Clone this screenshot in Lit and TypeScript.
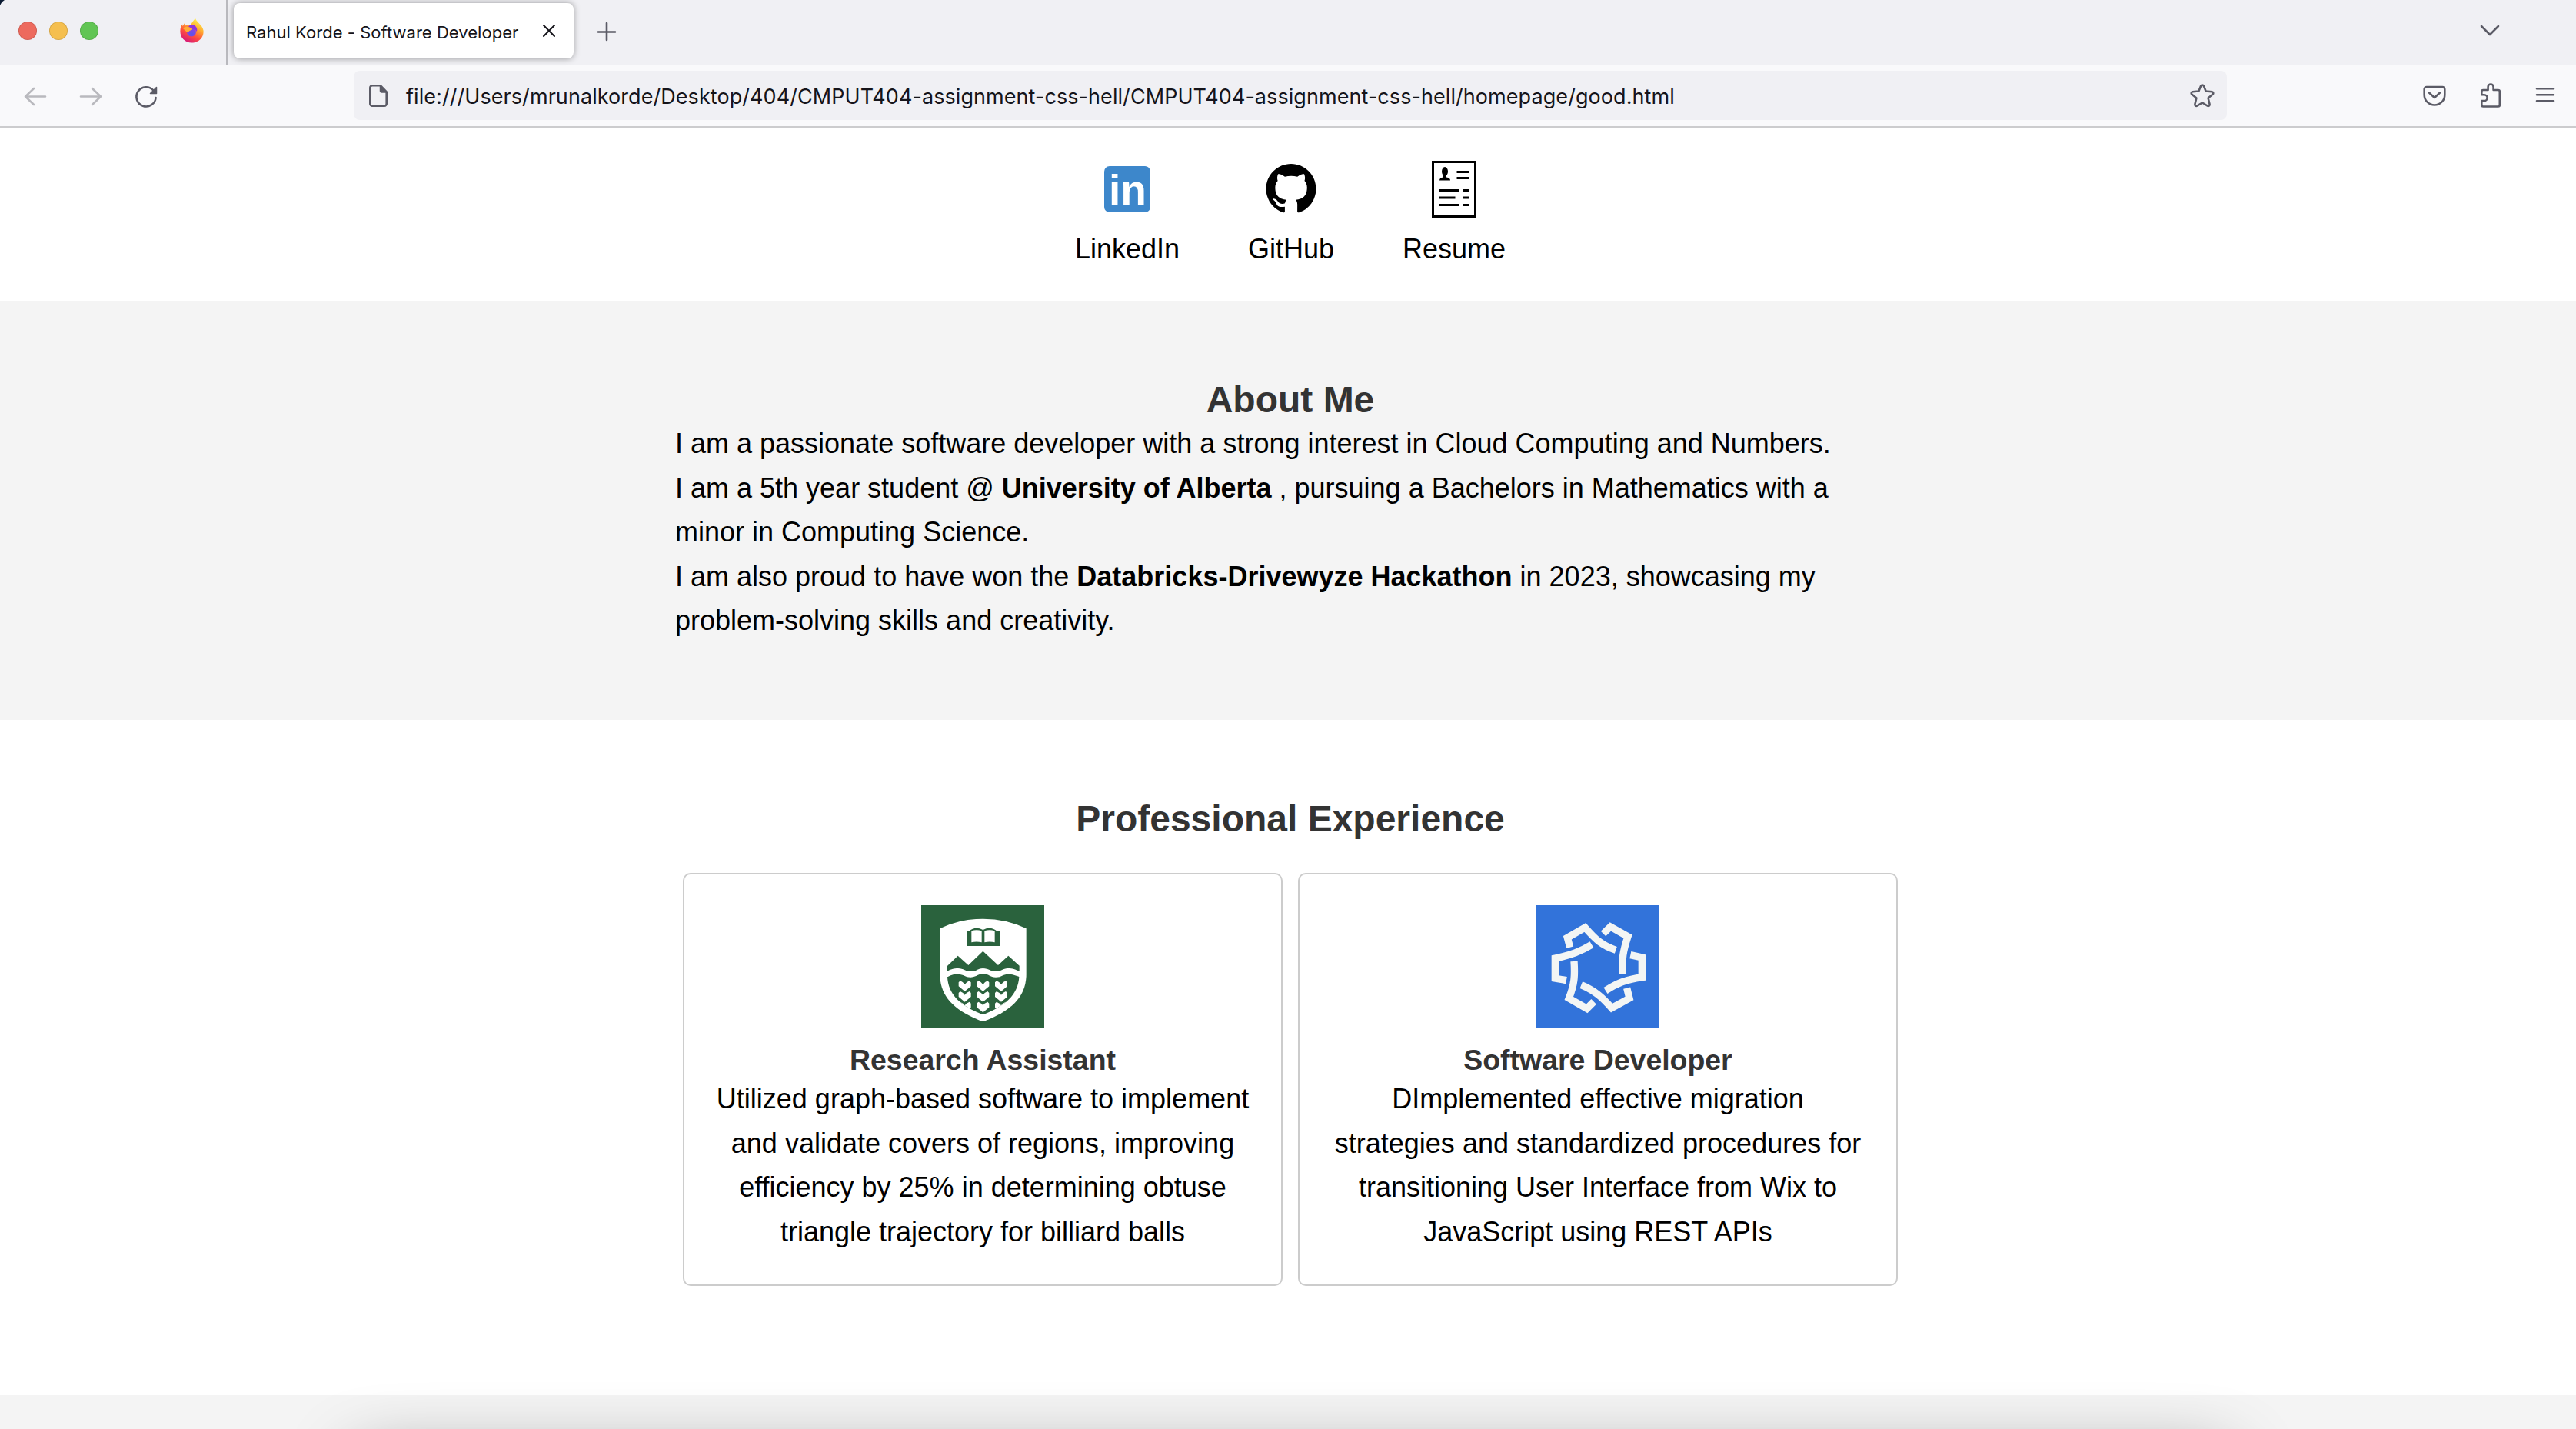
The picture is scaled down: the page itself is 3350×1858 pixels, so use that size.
import { LitElement, html, css, svg } from "lit";
import { customElement } from "lit/decorators.js";

const octocat =
  "M8 0C3.58 0 0 3.58 0 8c0 3.54 2.29 6.53 5.47 7.59.4.07.55-.17.55-.38 0-.19-.01-.82-.01-1.49-2.01.37-2.53-.49-2.69-.94-.09-.23-.48-.94-.82-1.13-.28-.15-.68-.52-.01-.53.63-.01 1.08.58 1.23.82.72 1.21 1.87.87 2.33.66.07-.52.28-.87.51-1.07-1.78-.2-3.64-.89-3.64-3.95 0-.87.31-1.59.82-2.15-.08-.2-.36-1.02.08-2.12 0 0 .67-.21 2.2.82.64-.18 1.32-.27 2-.27.68 0 1.36.09 2 .27 1.53-1.04 2.2-.82 2.2-.82.44 1.1.16 1.92.08 2.12.51.56.82 1.27.82 2.15 0 3.07-1.87 3.75-3.65 3.95.29.25.54.73.54 1.48 0 1.07-.01 1.93-.01 2.2 0 .21.15.46.55.38A8.013 8.013 0 0016 8c0-4.42-3.58-8-8-8z";

@customElement("browser-chrome")
export class BrowserChrome extends LitElement {
  static styles = css`
    :host {
      display: block;
      font-family: Inter, "Liberation Sans", sans-serif;
      color: #15141a;
    }
    svg {
      display: block;
      flex: none;
      overflow: visible;
      fill: none;
      stroke: #5b5b66;
      stroke-width: 2.6;
      stroke-linecap: round;
      stroke-linejoin: round;
    }
    .tabs {
      height: 84px;
      box-sizing: border-box;
      display: flex;
      align-items: flex-start;
      background: #f0f0f4;
      position: relative;
    }
    .corner {
      position: absolute;
      left: 0;
      top: 0;
      width: 6px;
      height: 7px;
      background: #0b1b33;
      clip-path: polygon(0 0, 100% 0, 40% 40%, 0 100%);
    }
    .lights {
      display: flex;
      gap: 16px;
      padding: 28px 0 0 24px;
    }
    .light {
      width: 24px;
      height: 24px;
      border-radius: 50%;
      box-sizing: border-box;
      border: 1px solid rgba(0, 0, 0, 0.12);
    }
    .red { background: #ed6a5e; }
    .yellow { background: #f5bf4f; }
    .green { background: #61c554; }
    .fox {
      margin: 24px 0 0 106px;
      stroke: none;
    }
    .rule {
      width: 2px;
      height: 84px;
      margin-left: 29px;
      background: #b9b9be;
    }
    .tab {
      width: 442px;
      height: 72px;
      box-sizing: border-box;
      margin: 4px 0 0 8px;
      padding: 0 24px 0 16px;
      display: flex;
      align-items: center;
      justify-content: space-between;
      border-radius: 8px;
      background: #fff;
      box-shadow: 0 0 8px rgba(0, 0, 0, 0.38);
    }
    .title {
      font-size: 22px;
      letter-spacing: 0.03px;
      white-space: nowrap;
      padding-top: 5px;
    }
    .close { stroke: #15141a; stroke-width: 2; }
    .plus { margin: 29px 0 0 31px; }
    .chevron { margin: 31px 100px 0 auto; }
    .bar {
      height: 82px;
      box-sizing: border-box;
      border-bottom: 2px solid #ccccce;
      display: flex;
      align-items: center;
      background: #f9f9fb;
      padding: 0 24px 0 30px;
    }
    .off { stroke: #b9b9be; }
    .nav {
      display: flex;
      gap: 40px;
    }
    .url {
      width: 2436px;
      height: 64px;
      box-sizing: border-box;
      margin-left: 254px;
      padding: 0 16px;
      display: flex;
      align-items: center;
      border-radius: 8px;
      background: #f0f0f4;
    }
    .address {
      flex: 1;
      margin-left: 20px;
      padding-top: 3px;
      font-size: 27px;
      letter-spacing: 0.065px;
      white-space: nowrap;
    }
    .tools {
      margin-left: auto;
      display: flex;
      gap: 40px;
    }
  `;

  render() {
    return html`
      <div class="tabs">
        <div class="corner"></div>
        <div class="lights">
          <span class="light red"></span>
          <span class="light yellow"></span>
          <span class="light green"></span>
        </div>
        <svg class="fox" width="31" height="32" viewBox="0 0 31 32">
          <defs>
            <linearGradient id="flame" x1="0.8" y1="0.05" x2="0.3" y2="1">
              <stop offset="0" stop-color="#fff44f"></stop>
              <stop offset="0.35" stop-color="#ffa930"></stop>
              <stop offset="0.65" stop-color="#ff4f3d"></stop>
              <stop offset="1" stop-color="#d4147c"></stop>
            </linearGradient>
            <radialGradient id="globe" cx="0.5" cy="0.75" r="0.8">
              <stop offset="0" stop-color="#5a55e8"></stop>
              <stop offset="1" stop-color="#9b3be0"></stop>
            </radialGradient>
          </defs>
          <path fill="url(#flame)" d="M20 0c1.500 4.500 9 8 10.500 15.500C31.500 24.500 24.500 31.500 15.500 31.500S0 25 .4 16C.6 11.500 2 9 3.200 7.500L3.500 10 6.500 5.500 7.300 9.300c2-1 5-1.200 7.200-.4C14.500 6 17.500 3 20 0z"></path>
          <circle cx="15" cy="17.500" r="6" fill="url(#globe)"></circle>
          <path fill="#8f34dc" d="M11 10.500c3-3.500 8-2.500 10 .5 1.500 2.500 1.500 4.500.8 6-1.500-3-4-3.500-6-3-1-1.800-3-2.500-4.800-3.500z"></path>
          <path fill="#ffab35" d="M4 13c3-3.500 7-2.500 9-.5 2.500 0 3.500.8 3 2-1 1-3.500 1-4.500 2.500-1 1-3 .5-4-.8z"></path>
        </svg>
        <div class="rule"></div>
        <div class="tab">
          <span class="title">Rahul Korde - Software Developer</span>
          <svg class="close" width="16" height="16" viewBox="0 0 16 16"><path d="M1 1l14 14M15 1L1 15"></path></svg>
        </div>
        <svg class="plus" width="24" height="24" viewBox="0 0 24 24"><path d="M12 1v22M1 12.500h22"></path></svg>
        <svg class="chevron" width="24" height="16" viewBox="0 0 24 16"><path d="M1 3l11 11L23 3"></path></svg>
      </div>
      <div class="bar">
        <div class="nav">
          <svg class="off" width="32" height="32"><path d="M29 17.500H3M14 7L3 17.500l11 10.500"></path></svg>
          <svg class="off" width="32" height="32"><path d="M3 17.500h26M18 7l11 10.500L18 28"></path></svg>
          <svg width="32" height="32">
            <path d="M25.500 9.500A12.600 12.600 0 1 0 28.600 19"></path>
            <path d="M29.500 5.500v8h-8z" fill="#5b5b66" stroke-width="1.500"></path>
          </svg>
        </div>
        <div class="url">
          <svg width="32" height="32">
            <path d="M8 3.300h11l7.700 8V27a2.700 2.700 0 0 1-2.700 2.700H8A2.700 2.700 0 0 1 5.300 27V6A2.700 2.700 0 0 1 8 3.300z"></path>
            <path d="M18.500 4l8 8h-6a2 2 0 0 1-2-2z" fill="#5b5b66" stroke-width="1.500"></path>
          </svg>
          <span class="address">file:///Users/mrunalkorde/Desktop/404/CMPUT404-assignment-css-hell/CMPUT404-assignment-css-hell/homepage/good.html</span>
          <svg width="32" height="32">
            <path d="M14.200 3.600a2 2 0 0 1 3.600 0L20.600 10.500l8 .8a1.900 1.900 0 0 1 1.100 3.300L23.600 19.500l2 8a1.900 1.900 0 0 1-2.800 2.100L16 25.500l-6.800 4.100a1.900 1.900 0 0 1-2.800-2.100l2-8-6.100-4.900a1.900 1.900 0 0 1 1.100-3.300l8-.8z"></path>
          </svg>
        </div>
        <div class="tools">
          <svg width="32" height="32">
            <path d="M5.700 5h20.600a3 3 0 0 1 3 3v7.500a13.300 13 0 0 1-26.600 0V8a3 3 0 0 1 3-3z"></path>
            <path d="M9 12.500l7 6.500 7-6.500"></path>
          </svg>
          <svg width="32" height="32">
            <path d="M5.300 15.300v-4.300a2 2 0 0 1 2-2h6.300V5a3.500 3.500 0 0 1 7 0v4h6.200a2 2 0 0 1 2 2v17.500a2 2 0 0 1-2 2H7.300a2 2 0 0 1-2-2V23h3.500a3.800 3.800 0 0 0 0-7.700z"></path>
          </svg>
          <svg width="32" height="32"><path d="M5 7.300h22M5 15.300h22M5 23.300h22"></path></svg>
        </div>
      </div>
    `;
  }
}

interface Job {
  title: string;
  lines: string[];
  logo: unknown;
}

const stalk = "M-24-14l6-6q13 5 18 14q5-9 18-14l6 6v15l-24 20-24-20z";
const field =
  "M216 391C232 382 240 380 258 380C280 380 285 392 307 392C330 392 335 379 355 379C378 379 382 392 405 392C428 392 432 380 452 380C472 380 480 384 496 390C492 462 440 505 355 538C270 505 220 462 216 391Z";

const shieldLogo = html`<svg width="160" height="160" viewBox="114 111 480 480">
  <defs><clipPath id="field"><path d=${field}></path></clipPath></defs>
  <path fill="#2a623d" d="M114 111h480v480H114z"></path>
  <path fill="#fff" d="M187 202Q262 164 355 164Q448 164 524 202V380C524 465 470 522 355 565C240 522 187 465 187 380Z"></path>
  <path fill="#2a623d" d="M291 212h9q25-20 55-5q30-15 55 5h10v58H291z"></path>
  <path fill="#fff" d="M310 211q20-6 40 0v45q-20-5-40 0zM361 211q20-6 40 0v45q-20-5-40 0z"></path>
  <path fill="#2a623d" d="M215 349L257 308L298 345L355 290L414 345L454 308L497 347V369C480 361 472 357 452 357C432 357 428 369 405 369C382 369 378 357 355 357C335 357 330 369 307 369C285 369 280 357 258 357C240 357 230 360 215 369Z"></path>
  <path fill="#2a623d" d=${field}></path>
  <g clip-path="url(#field)" fill="#fff">
    ${[0, 1, 2].map((row) =>
      [284, 355, 426].map((x) => svg`<path d=${stalk} transform=${`translate(${x} ${426 + row * 41})`}></path>`)
    )}
  </g>
</svg>`;

const knotLogo = html`<svg width="160" height="160" viewBox="114 111 480 480">
  <path fill="#3273da" d="M114 111h480v480H114z"></path>
  <g fill="none" stroke="#f3f5f4" stroke-width="28">
    <path d="M245 275L235 238L304 198C345 245 370 268 424 286"></path>
    <path d="M375 222L403 195L471 233C452 290 447 320 451 379"></path>
    <path d="M481 305L526 315V392C460 402 430 415 384 444"></path>
    <path d="M467 434L477 474L408 512C375 475 345 445 289 422"></path>
    <path d="M338 487L311 514L241 474C262 420 265 390 261 330"></path>
    <path d="M231 404L187 396V318C250 305 285 292 330 265"></path>
  </g>
</svg>`;

const jobs: Job[] = [
  {
    title: "Research Assistant",
    lines: [
      "Utilized graph-based software to implement",
      "and validate covers of regions, improving",
      "efficiency by 25% in determining obtuse",
      "triangle trajectory for billiard balls",
    ],
    logo: shieldLogo,
  },
  {
    title: "Software Developer",
    lines: [
      "DImplemented effective migration",
      "strategies and standardized procedures for",
      "transitioning User Interface from Wix to",
      "JavaScript using REST APIs",
    ],
    logo: knotLogo,
  },
];

@customElement("app-root")
export class AppRoot extends LitElement {
  static styles = css`
    :host {
      display: block;
      position: relative;
      width: 3350px;
      height: 1858px;
      overflow: hidden;
      background: #fff;
      color: #000;
      font-family: "Liberation Sans", Arial, sans-serif;
      font-size: 36px;
      line-height: 57.6px;
    }
    .page { width: 3356px; }
    h2, h3, p { margin: 0; }
    svg { display: block; }
    h2 {
      font-size: 48px;
      line-height: 56px;
      color: #333;
      text-align: center;
    }
    header {
      height: 225px;
      box-sizing: border-box;
      padding-top: 40px;
      display: flex;
      justify-content: center;
      gap: 89px;
    }
    .link {
      display: flex;
      flex-direction: column;
      align-items: center;
      gap: 9px;
    }
    .about {
      height: 545px;
      box-sizing: border-box;
      padding-top: 101px;
      background: #f4f4f4;
    }
    .about p {
      width: 1600px;
      margin: 0 auto;
      white-space: nowrap;
    }
    .work {
      height: 878px;
      box-sizing: border-box;
      padding-top: 101px;
    }
    .cards {
      display: flex;
      justify-content: center;
      gap: 20px;
      margin-top: 42px;
    }
    .card {
      width: 780px;
      height: 537px;
      box-sizing: border-box;
      border: 2px solid #ccc;
      border-radius: 10px;
      padding-top: 40px;
      display: flex;
      flex-direction: column;
      align-items: center;
      text-align: center;
      white-space: nowrap;
    }
    h3 {
      margin-top: 20px;
      font-size: 37.44px;
      line-height: 43px;
      color: #333;
    }
    footer {
      height: 60px;
      background: #f4f4f4;
    }
    .shade {
      position: absolute;
      left: 464px;
      right: 452px;
      top: 1897px;
      height: 200px;
      box-shadow: 0 0 90px rgba(0, 0, 0, 0.42);
    }
  `;

  render() {
    return html`
      <browser-chrome></browser-chrome>
      <div class="page">
        <header>
          <div class="link">
            <svg width="80" height="80">
              <rect x="10" y="10" width="60" height="60" rx="7" fill="#3d87cb"></rect>
              <text x="40.500" y="60" text-anchor="middle" font-size="55" font-weight="700" fill="#fff">in</text>
            </svg>
            <span>LinkedIn</span>
          </div>
          <div class="link">
            <svg width="80" height="80"><path transform="translate(7.500 7) scale(4.060)" d=${octocat}></path></svg>
            <span>GitHub</span>
          </div>
          <div class="link">
            <svg width="80" height="80">
              <g fill="none" stroke="#000" stroke-width="3">
                <rect x="12.500" y="4.500" width="55" height="71"></rect>
                <path d="M43.500 17.500H59M43.500 25.500H59M21 41.500H46.500M51.500 41.500H59M21 51H41.500M51.500 51H59M21 60.500H46.500M51.500 60.500H59"></path>
              </g>
              <ellipse cx="28" cy="17" rx="4" ry="6"></ellipse>
              <path d="M26 20h4v4.500q5 .5 5 4H21q0-3.500 5-4z"></path>
            </svg>
            <span>Resume</span>
          </div>
        </header>
        <section class="about">
          <h2>About Me</h2>
          <p>
            I am a passionate software developer with a strong interest in Cloud Computing and Numbers.<br />
            I am a 5th year student @ <b>University of Alberta</b> , pursuing a Bachelors in Mathematics with a<br />
            minor in Computing Science.<br />
            I am also proud to have won the <b>Databricks-Drivewyze Hackathon</b> in 2023, showcasing my<br />
            problem-solving skills and creativity.
          </p>
        </section>
        <section class="work">
          <h2>Professional Experience</h2>
          <div class="cards">
            ${jobs.map(
              (job) => html`<article class="card">
                ${job.logo}
                <h3>${job.title}</h3>
                <p>${job.lines.map((line, i) => (i ? html`<br />${line}` : line))}</p>
              </article>`
            )}
          </div>
        </section>
        <footer></footer>
      </div>
      <div class="shade"></div>
    `;
  }
}
